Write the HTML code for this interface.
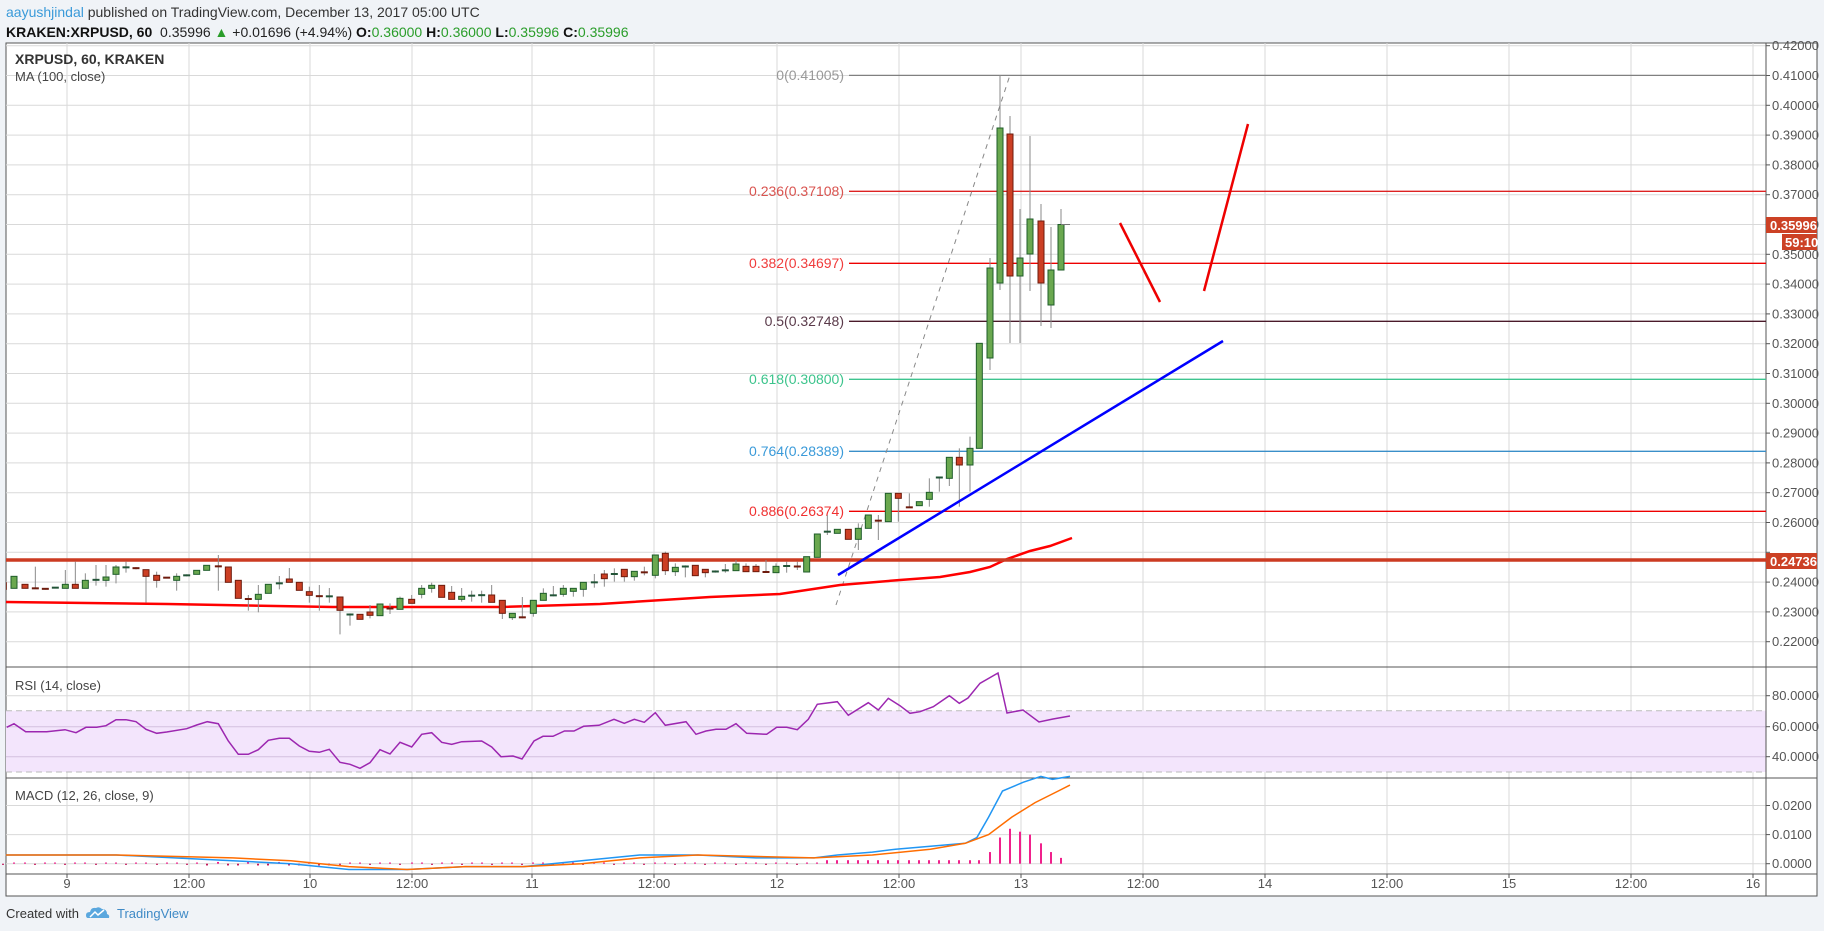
<!DOCTYPE html>
<html><head><meta charset="utf-8">
<style>
html,body{margin:0;padding:0;background:#f0f3f7;width:1824px;height:931px;overflow:hidden;font-family:"Liberation Sans",Arial,sans-serif;}
#hdr1{position:absolute;left:6px;top:4px;font-size:14px;color:#333;}
#hdr1 a{color:#3a9ad9;text-decoration:none}
#hdr2{position:absolute;left:6px;top:24px;font-size:14px;color:#222;}
#hdr2 b{color:#111}
.g{color:#2a9d2a}
svg{position:absolute;left:0;top:0}
</style></head><body>
<div id="hdr1"><a>aayushjindal</a> published on TradingView.com, December 13, 2017 05:00 UTC</div>
<div id="hdr2"><b>KRAKEN:XRPUSD, 60</b>&nbsp; 0.35996 <span class="g">&#9650;</span> +0.01696 (+4.94%) <b>O:</b><span class="g">0.36000</span> <b>H:</b><span class="g">0.36000</span> <b>L:</b><span class="g">0.35996</span> <b>C:</b><span class="g">0.35996</span></div>
<svg id="s" width="1824" height="931" xmlns="http://www.w3.org/2000/svg" font-family="Liberation Sans, Arial, sans-serif">
<defs><clipPath id="cp"><rect x="6" y="43" width="1760" height="624"/></clipPath></defs>
<rect x="6" y="43" width="1811" height="853" fill="#fff" stroke="#555" stroke-width="1"/>
<g id="grid" stroke="#d9d9d9" stroke-width="1"></g>
<!-- RSI band -->
<rect x="6" y="710.7" width="1760" height="61.3" fill="#f3e5fc"/>
<g id="grid2" stroke="#d9d9d9" stroke-width="1"></g>
<line x1="6" y1="710.7" x2="1766" y2="710.7" stroke="#bbb" stroke-dasharray="6,4"/>
<line x1="6" y1="772" x2="1766" y2="772" stroke="#bbb" stroke-dasharray="6,4"/>
<line x1="6" y1="667" x2="1817" y2="667" stroke="#555"/>
<line x1="6" y1="778" x2="1817" y2="778" stroke="#555"/>
<line x1="6" y1="874" x2="1817" y2="874" stroke="#555"/>
<line x1="1766" y1="43" x2="1766" y2="896" stroke="#555"/>
<g id="ticks" stroke="#555"></g>
<!-- fib lines -->
<g stroke-width="1.3">
<line x1="849" y1="75.4" x2="1766" y2="75.4" stroke="#808080"/>
<line x1="849" y1="191.3" x2="1766" y2="191.3" stroke="#d22"/>
<line x1="849" y1="263.3" x2="1766" y2="263.3" stroke="#e00"/>
<line x1="849" y1="321.3" x2="1766" y2="321.3" stroke="#4a1a2a"/>
<line x1="849" y1="379.3" x2="1766" y2="379.3" stroke="#3ec48f"/>
<line x1="849" y1="451.3" x2="1766" y2="451.3" stroke="#3a8fc9"/>
<line x1="849" y1="511.3" x2="1766" y2="511.3" stroke="#e00"/>
</g>
<g font-size="14" text-anchor="end">
<text x="844" y="80" fill="#999">0(0.41005)</text>
<text x="844" y="196" fill="#d9534f">0.236(0.37108)</text>
<text x="844" y="268" fill="#f03c3c">0.382(0.34697)</text>
<text x="844" y="326" fill="#5a3a4a">0.5(0.32748)</text>
<text x="844" y="384" fill="#3cc48c">0.618(0.30800)</text>
<text x="844" y="456" fill="#3a9ad9">0.764(0.28389)</text>
<text x="844" y="516" fill="#f03030">0.886(0.26374)</text>
</g>
<line x1="836" y1="605" x2="1010" y2="75" stroke="#888" stroke-width="1" stroke-dasharray="5,5"/>
<g clip-path="url(#cp)">
<path id="ma" fill="none" stroke="#f00" stroke-width="2.5" d=""/>
<line x1="6" y1="560" x2="1766" y2="560" stroke="#cc3b22" stroke-width="3.5"/>
<g id="candles"></g>
</g>
<line x1="838" y1="575" x2="1223" y2="341" stroke="#0000ff" stroke-width="2.5"/>
<line x1="1120" y1="223" x2="1160" y2="302" stroke="#e00" stroke-width="2.5"/>
<line x1="1204" y1="291" x2="1248" y2="124" stroke="#e00" stroke-width="2.5"/>
<path id="rsi" fill="none" stroke="#9c27b0" stroke-width="1.5" d=""/>
<g id="hist"></g>
<path id="macd" fill="none" stroke="#2196f3" stroke-width="1.5" d=""/>
<path id="sig" fill="none" stroke="#ff6d00" stroke-width="1.5" d=""/>
<!-- labels -->
<text x="15" y="64" font-size="14" font-weight="bold" fill="#333">XRPUSD, 60, KRAKEN</text>
<text x="15" y="81" font-size="13" fill="#444">MA (100, close)</text>
<text x="15" y="690" font-size="13" fill="#444">RSI (14, close)</text>
<text x="15" y="800" font-size="13" fill="#444">MACD (12, 26, close, 9)</text>
<g id="plab" font-size="13" fill="#555"></g>
<g font-size="13" fill="#555">
<text x="1772" y="700">80.0000</text><text x="1772" y="731">60.0000</text><text x="1772" y="761">40.0000</text>
<text x="1772" y="810">0.0200</text><text x="1772" y="839">0.0100</text><text x="1772" y="868">0.0000</text>
</g>
<g id="xlab" font-size="13" fill="#555" text-anchor="middle"></g>
<rect x="1766" y="217" width="51" height="16" fill="#cc4125"/>
<text x="1770" y="230" font-size="13" font-weight="bold" fill="#fff">0.35996</text>
<rect x="1782" y="234" width="35" height="16" fill="#cc4125"/>
<text x="1785" y="247" font-size="13" font-weight="bold" fill="#fff">59:10</text>
<rect x="1766" y="553" width="51" height="16" fill="#cc4125"/>
<text x="1770" y="566" font-size="13" font-weight="bold" fill="#fff">0.24736</text>
<!-- footer -->
<text x="6" y="918" font-size="13" fill="#333">Created with</text>
<g transform="translate(86,906)">
<path d="M2 12 Q0 12 0 9 Q0 6 4 6 Q5 1 10 2 Q13 0 16 3 Q21 3 21 8 Q24 9 23 12 Z" fill="#5aa7de"/>
<path d="M4 11 L9 6 L12 9 L18 4" stroke="#fff" stroke-width="1.5" fill="none"/>
</g>
<text x="117" y="918" font-size="13" fill="#3f8ac6">TradingView</text>
</svg>
<script>
var NS="http://www.w3.org/2000/svg";
function el(p,t,a){var e=document.createElementNS(NS,t);for(var k in a)e.setAttribute(k,a[k]);p.appendChild(e);return e;}
var s=document.getElementById('s');
var grid=document.getElementById('grid'),grid2=document.getElementById('grid2'),plab=document.getElementById('plab'),xlab=document.getElementById('xlab'),ticks=document.getElementById('ticks');
var vx=[67,189,310,412,532,654,777,899,1021,1143,1265,1387,1509,1631,1753];
var xl=["9","12:00","10","12:00","11","12:00","12","12:00","13","12:00","14","12:00","15","12:00","16"];
vx.forEach(function(x,i){el(grid,'line',{x1:x,y1:43,x2:x,y2:874});var t=el(xlab,'text',{x:x,y:888});t.textContent=xl[i];el(ticks,'line',{x1:x,y1:874,x2:x,y2:878});});
for(var k=0;k<=20;k++){var p=0.42-k*0.01;var y=75.5+(0.41-p)*2980;el(grid,'line',{x1:6,y1:y,x2:1766,y2:y});el(ticks,'line',{x1:1766,y1:y,x2:1770,y2:y});
 if(Math.abs(p-0.25)>0.001){var t=el(plab,'text',{x:1772,y:y+4.5});t.textContent=p.toFixed(5);}}
[695.7,726.7,756.7].forEach(function(y){el(grid2,'line',{x1:6,y1:y,x2:1766,y2:y,stroke:(y>711?'#d3c0de':'#d9d9d9')});el(ticks,'line',{x1:1766,y1:y,x2:1770,y2:y});});
[805.5,834.6,863.7].forEach(function(y){el(grid2,'line',{x1:6,y1:y,x2:1766,y2:y});el(ticks,'line',{x1:1766,y1:y,x2:1770,y2:y});});
[710.7,772].forEach(function(y){});
var C=[];
function add(arr,ox,oy,sx){arr.forEach(function(c){var x=ox+c[0]/sx,t=oy+c[1]/3,b=oy+c[2]/3;var wt=c.length>4?oy+c[4]/3:t,wb=c.length>5?oy+c[5]/3:b;C.push([x,t,b,c[3],Math.min(wt,t),Math.max(wb,b)]);});}
add([[10,428,448,'r'],[42,409,445,'g'],[75,433,445,'r'],[106,444,446,'r',380,446],[136,444,449,'r'],[166,441,445,'g'],[196,433,445,'g',390,445],[226,433,445,'r',365,445],[256,421,445,'g',400,445],[288,417,422,'g',375,437],[318,411,421,'g',375,440],[348,381,403,'g',375,430],[378,381,383,'g',365,398],[408,381,388,'r'],[438,389,409,'r',389,488],[470,406,421,'r',395,443],[500,411,415,'r'],[530,409,421,'g',400,452],[560,403,409,'g'],[590,391,403,'g'],[620,376,391,'g'],[655,376,382,'r',345,452],[685,381,427,'r'],[715,421,475,'r'],[745,475,479,'r',465,512],[775,463,478,'g',435,517],[805,433,460,'g'],[838,427,433,'g',408,448],[868,417,427,'r',384,427],[898,427,451,'r'],[928,455,466,'r',440,488],[958,465,472,'r',435,512],[988,466,472,'g',444,488],[1020,471,511,'r',471,583],[1050,522,525,'g',520,557],[1080,523,538,'r'],[1110,516,526,'r',495,535],[1140,492,527,'g'],[1170,503,508,'r',490,522],[1200,475,508,'g',470,508],[1235,478,490,'r',465,490],[1265,445,463,'g',435,475],[1295,436,445,'g',428,458],[1325,436,472,'r'],[1355,457,478,'r',438,478],[1385,469,478,'g',444,485],[1415,465,469,'g',452,485],[1445,462,469,'g',452,488],[1475,465,487,'r',435,487]],0,440,3);
add([[37,181,220,'r',181,237],[67,220,233,'g',220,240],[97,229,235,'r',171,235],[130,181,220,'g',181,230],[160,160,181,'g',145,181],[190,163,169,'g',138,169],[220,145,163,'g',135,170],[250,145,154,'g',145,170],[280,127,148,'g',127,170],[313,126,128,'g',102,143]],490,540,3);
add([[13,42,56,'r',30,80],[43,40,44,'g',25,65],[73,28,50,'r',28,65],[103,34,50,'g',34,62],[133,34,40,'r',20,46],[166,-15,46,'g',-15,55],[196,-20,32,'r',-25,45],[226,22,35,'g',10,48],[256,16,23,'g',16,52],[286,16,47,'r'],[316,28,38,'r',28,52],[346,31,38,'g'],[376,30,32,'g',12,38],[408,12,32,'g',0,32],[438,19,35,'r',10,35],[468,19,35,'r',12,35],[498,34,38,'r',0,38],[528,19,38,'g',10,38],[560,16,20,'g',5,38],[592,16,23,'r',5,30]],600,560,3);
add([[380,1490,1536,'g'],[412,1422,1492,'g'],[442,1414,1416,'g',1365,1425],[472,1408,1420,'g'],[505,1408,1438,'r'],[535,1405,1438,'g',1390,1470],[565,1365,1405,'g'],[595,1381,1383,'r',1365,1440],[625,1300,1385,'g'],[655,1300,1315,'r',1300,1385],[688,1341,1343,'r',1300,1343],[718,1325,1337,'g'],[748,1297,1318,'g',1255,1340],[778,1250,1255,'g',1250,1295],[808,1192,1255,'g',1192,1278],[838,1192,1215,'r',1165,1340],[870,1165,1215,'g',1130,1295],[898,850,1165,'g']],680,60,3);
[[990,268,358,'g',258,370],[1000,128,283,'g',75,290],[1010,134,276,'r',116,343],[1020,258,276,'g',209,343],[1030,219,254,'g',136,291],[1041,221,283,'r',204,326],[1051,270,305,'g',227,328],[1061,224.5,270,'g',209,270]].forEach(function(c){C.push(c);});
var cg=document.getElementById('candles');
C.forEach(function(c){var x=c[0];
 el(cg,'line',{x1:x,y1:c[4],x2:x,y2:c[5],stroke:'#8a8a8a','stroke-width':1});
 var h=c[2]-c[1];var g=c[3]=='g';
 if(h<2.5){el(cg,'rect',{x:x-3.5,y:(c[1]+c[2])/2-1,width:7,height:2,fill:g?'#225437':'#6e1b0d'});}
 else el(cg,'rect',{x:x-3,y:c[1],width:6,height:h,fill:g?'#6aa84f':'#cc3f24',stroke:g?'#1f5d2a':'#6e1b0d','stroke-width':1});
});
el(cg,'line',{x1:1061,y1:224.5,x2:1070,y2:224.5,stroke:'#777'});
function pd(pts){return 'M'+pts.map(function(p){return p[0].toFixed(1)+' '+p[1].toFixed(1)}).join(' L');}
document.getElementById('ma').setAttribute('d',pd([[6,602],[167,604],[333,607],[500,607],[600,604],[710,597],[780,594],[840,585],[900,580],[940,577],[970,572],[990,567],[1007,559],[1030,551],[1050,546],[1072,538]]));
var r=[[6.7,727.3],[14,723.7],[25.7,731.7],[46.7,731.7],[65,729.7],[76,732.7],[86,727.3],[96.7,727.3],[106,725.7],[116,719.7],[126,719.7],[136,721.7],[146,729.3],[156.7,733.3],[166.7,732],[186.7,728.7],[196.7,725],[207.3,721.7],[218.3,723.7],[228.3,741],[238.3,754.3],[248.3,754.3],[258.3,749.7],[268.3,740.3],[279.3,738.3],[289.3,738.3],[299.3,746],[309.3,751.3],[319.3,752.3],[329.3,749.3],[340,762.3],[350,764.3],[360,768.3],[370,762.7],[380,749.7],[390,754],[400,742.3],[411.7,747],[421.7,734.3],[431.7,732.7],[441.7,742.3],[451.7,744.3],[461.7,741.7],[481.7,741],[491.7,747],[501,756.7],[513,756],[522,759],[534,741],[543,736.3],[553,736.3],[564.5,731],[574,731],[583.6,726.3],[599,725.3],[614,719.3],[624.3,723.3],[634.3,719.3],[644.3,722.3],[655.3,712.7],[665.3,725.3],[686,721.7],[696,734.3],[706,731],[716,729.3],[726,729.3],[736,723.7],[746.7,733.3],[766.7,734.3],[776.7,727.3],[786.7,727.3],[797.3,729.7],[808.3,719.3],[817.3,704.3],[837.3,701.7],[848.3,715.3],[868.3,702.7],[878.3,710],[888.3,698.3],[900,705.7],[910,713.3],[920,711.7],[933.3,706.7],[949.3,695.7],[959.3,703.3],[968,698],[980,683.3],[998,673],[1007,713],[1023,710],[1039,722],[1053,719],[1070,716]];
document.getElementById('rsi').setAttribute('d',pd(r));
function mv(a){return a.map(function(p){return [p[0]*1.163,863.7-p[1]*2910];});}
var bl=[[5,.003],[100,.003],[150,.002],[200,.001],[250,0],[300,-.002],[350,-.002],[400,-.001],[450,-.001],[500,.001],[550,.003],[600,.003],[650,.002],[700,.002],[720,.003],[750,.004],[770,.005],[800,.006],[830,.007],[840,.009],[850,.016],[862,.025],[880,.028],[895,.030],[905,.029],[920,.030]];
var ol=[[5,.003],[100,.003],[200,.002],[250,.001],[300,-.001],[350,-.002],[400,-.001],[450,-.001],[500,0],[550,.002],[600,.003],[700,.002],[750,.003],[800,.005],[830,.007],[850,.010],[870,.016],[890,.021],[910,.025],[920,.027]];
document.getElementById('macd').setAttribute('d',pd(mv(bl)));
document.getElementById('sig').setAttribute('d',pd(mv(ol)));
var hg=document.getElementById('hist');
var hv={980:.002,990:.004,1000:.009,1010:.012,1020:.011,1030:.010,1041:.007,1051:.004,1061:.002};
C.forEach(function(c,i){var x=Math.round(c[0]);var v=hv[x];
 if(v===undefined){v=(x>820&&x<980)?0.0012:((x>200&&x<330)?-0.0006:0.0004)*((i%3)?1:-1);}
 var h=v*2910;el(hg,'rect',{x:x-1,y:h>0?863.7-h:863.7,width:2,height:Math.max(Math.abs(h),1),fill:v>0?'#f0218c':'#c2185b'});});
</script>
</body></html>
